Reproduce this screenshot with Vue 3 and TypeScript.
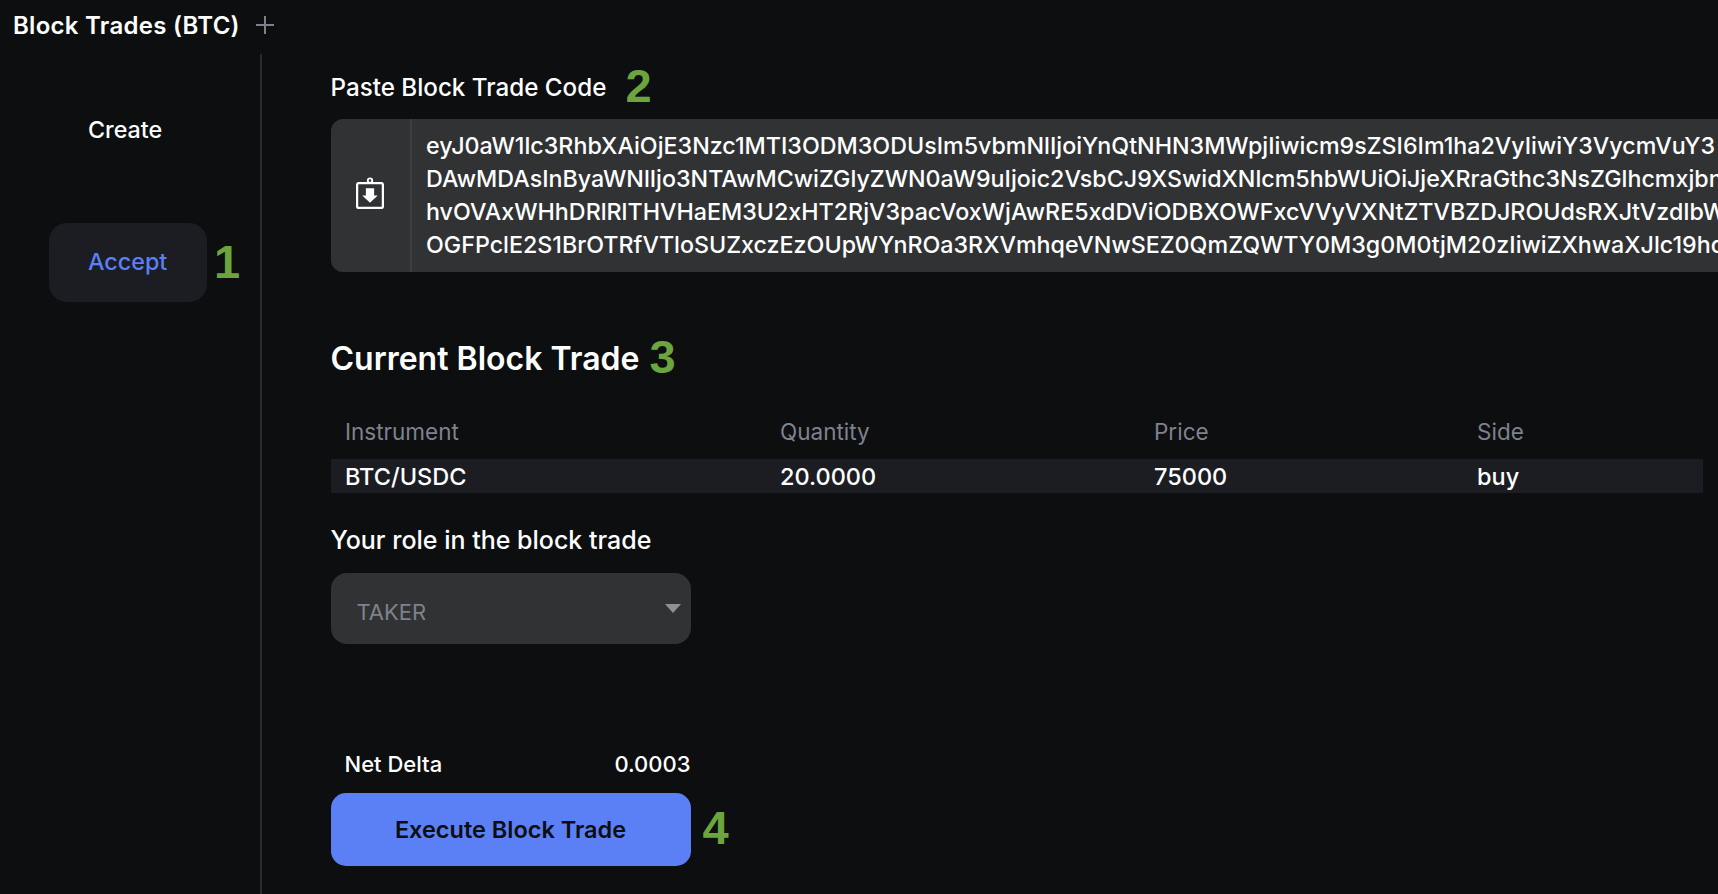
<script setup lang="ts">
const codeLines: string[] = [
  'eyJ0aW1lc3RhbXAiOjE3Nzc1MTI3ODM3ODUsIm5vbmNlIjoiYnQtNHN3MWpjIiwicm9sZSI6Im1ha2VyIiwiY3VycmVuY3',
  'DAwMDAsInByaWNlIjo3NTAwMCwiZGlyZWN0aW9uIjoic2VsbCJ9XSwidXNlcm5hbWUiOiJjeXRraGthc3NsZGlhcmxjbnU',
  'hvOVAxWHhDRlRlTHVHaEM3U2xHT2RjV3pacVoxWjAwRE5xdDViODBXOWFxcVVyVXNtZTVBZDJROUdsRXJtVzdIbWY',
  'OGFPclE2S1BrOTRfVTloSUZxczEzOUpWYnROa3RXVmhqeVNwSEZ0QmZQWTY0M3g0M0tjM20zIiwiZXhwaXJlc19hd',
]
const headers: string[] = ['Instrument', 'Quantity', 'Price', 'Side']
const row: string[] = ['BTC/USDC', '20.0000', '75000', 'buy']
</script>

<template>
  <div class="page">
    <header class="tabbar">
      <span class="tab-title">Block Trades (BTC)</span>
      <svg class="plus" viewBox="0 0 18 18" width="18" height="18">
        <path d="M9 0v18M0 9h18" stroke="#7d818c" stroke-width="2" fill="none" />
      </svg>
    </header>

    <div class="body">
      <aside class="sidebar">
        <div class="nav-item">Create</div>
        <div class="nav-row">
          <div class="nav-item active">Accept</div>
          <span class="step step-1">1</span>
        </div>
      </aside>

      <main class="content">
        <div class="label-row">
          <span class="label">Paste Block Trade Code</span>
          <span class="step step-2">2</span>
        </div>

        <div class="code-box">
          <div class="paste-btn">
            <svg class="paste-icon" viewBox="0 0 27 31" width="28" height="32">
              <rect x="1" y="6" width="25" height="24" rx="1.5" fill="none" stroke="#fff" stroke-width="2.200" />
              <circle cx="13.5" cy="3.500" r="2.200" fill="none" stroke="#fff" stroke-width="1.800" />
              <path d="M9.500 11h8v7h3.500l-7.500 7-7.500-7h3.500z" fill="#fff" />
            </svg>
          </div>
          <div class="code-text">
            <div v-for="line in codeLines" :key="line" class="code-line">{{ line }}</div>
          </div>
        </div>

        <div class="heading-row">
          <h2 class="heading">Current Block Trade</h2>
          <span class="step step-3">3</span>
        </div>

        <div class="table">
          <div class="thead">
            <span v-for="h in headers" :key="h">{{ h }}</span>
          </div>
          <div class="trow">
            <span v-for="c in row" :key="c">{{ c }}</span>
          </div>
        </div>

        <div class="label role-label">Your role in the block trade</div>
        <div class="select">
          <span class="select-value">TAKER</span>
          <span class="caret"></span>
        </div>

        <div class="net">
          <span>Net Delta</span>
          <span>0.0003</span>
        </div>
        <div class="action-row">
          <button class="execute" type="button">Execute Block Trade</button>
          <span class="step step-4">4</span>
        </div>
      </main>
    </div>
  </div>
</template>

<style>
html, body { margin: 0; background: #0d0e10; }
</style>

<style scoped>
.page {
  width: 1718px;
  height: 894px;
  background: #0d0e10;
  color: #fff;
  font-family: Inter, "Liberation Sans", sans-serif;
  font-size: 22px;
  overflow: hidden;
  display: flex;
  flex-direction: column;
}
.tabbar {
  height: 54px;
  flex: none;
  display: flex;
  align-items: flex-start;
  padding: 12px 0 0 13px;
  box-sizing: border-box;
  gap: 16px;
}
.tab-title { font-size: 24px; font-weight: 600; line-height: 28px; letter-spacing: 0.28px; white-space: nowrap; }
.plus { margin-top: 4px; }
.body { flex: 1; display: flex; min-height: 0; }
.sidebar {
  width: 262px;
  flex: none;
  box-sizing: border-box;
  border-right: 2px solid #2a2b2e;
  padding: 37px 0 0 49px;
  display: flex;
  flex-direction: column;
  gap: 53px;
}
.nav-row { display: flex; align-items: center; gap: 7px; }
.nav-item {
  width: 158px;
  height: 79px;
  box-sizing: border-box;
  padding: 0 0 2px 39px;
  display: flex;
  align-items: center;
  border-radius: 18px;
  font-size: 23.3px;
  font-weight: 500;
}
.active { background: #1b1d22; color: #5b7ff5; }
.step {
  font-family: "Liberation Sans", Arial, sans-serif;
  font-weight: 700;
  font-size: 47px;
  line-height: 40px;
  color: #6ca53d;
}
.step-1 { margin-top: -2px; }
.content {
  flex: 1;
  min-width: 0;
  box-sizing: border-box;
  padding: 19px 15px 0 68.5px;
  overflow: hidden;
}
.label { font-size: 24.2px; line-height: 30px; font-weight: 500; }
.label-row { display: flex; align-items: center; gap: 19px; height: 30px; }
.step-2 { margin-top: -4px; }
.code-box {
  margin: 16px -15px 0 0;
  height: 153px;
  background: #313234;
  border-radius: 12px 0 0 12px;
  display: flex;
  overflow: hidden;
}
.paste-btn {
  width: 79px;
  flex: none;
  border-right: 2px solid #3e3f41;
  display: flex;
  align-items: center;
  justify-content: center;
}
.paste-icon { margin: -5px 0 0 0; }
.code-text { padding: 10px 0 0 14.5px; min-width: 0; }
.code-line { line-height: 33.1px; white-space: nowrap; font-size: 23.25px; font-weight: 500; }
.heading-row { display: flex; align-items: center; gap: 10px; margin-top: 67px; height: 39px; }
.heading { margin: 0; font-size: 32px; font-weight: 600; line-height: 39px; }
.step-3 { margin-top: -4px; }
.table { margin-top: 39px; }
.thead, .trow {
  display: grid;
  grid-template-columns: 435px 374px 323px 1fr;
  padding-left: 14.5px;
}
.thead { height: 42px; line-height: 30px; color: #7e828c; font-size: 22.5px; }
.trow { height: 34px; line-height: 35px; background: #1b1d22; font-size: 23.5px; font-weight: 500; }
.role-label { margin-top: 32px; font-size: 25px; }
.select {
  margin-top: 18px;
  width: 360px;
  height: 71px;
  box-sizing: border-box;
  background: #313234;
  border-radius: 16px;
  padding: 24px 0 0 26px;
  position: relative;
}
.select-value { color: #7e828c; line-height: 30px; display: block; }
.caret {
  position: absolute;
  top: 31px;
  right: 10px;
  border-left: 8px solid transparent;
  border-right: 8px solid transparent;
  border-top: 9px solid #8f9094;
}
.net {
  margin-top: 105px;
  width: 360px;
  box-sizing: border-box;
  padding: 0 0 0 14px;
  display: flex;
  justify-content: space-between;
  line-height: 30px;
  height: 30px;
  font-weight: 500;
}
.action-row { display: flex; align-items: center; gap: 12px; margin-top: 14px; }
.execute {
  width: 360px;
  height: 73px;
  border: none;
  border-radius: 15px;
  background: #5b7ff5;
  color: #0d0e10;
  font: 600 23.5px Inter, "Liberation Sans", sans-serif;
  padding: 0;
}
.step-4 { margin-top: -4px; }
</style>
